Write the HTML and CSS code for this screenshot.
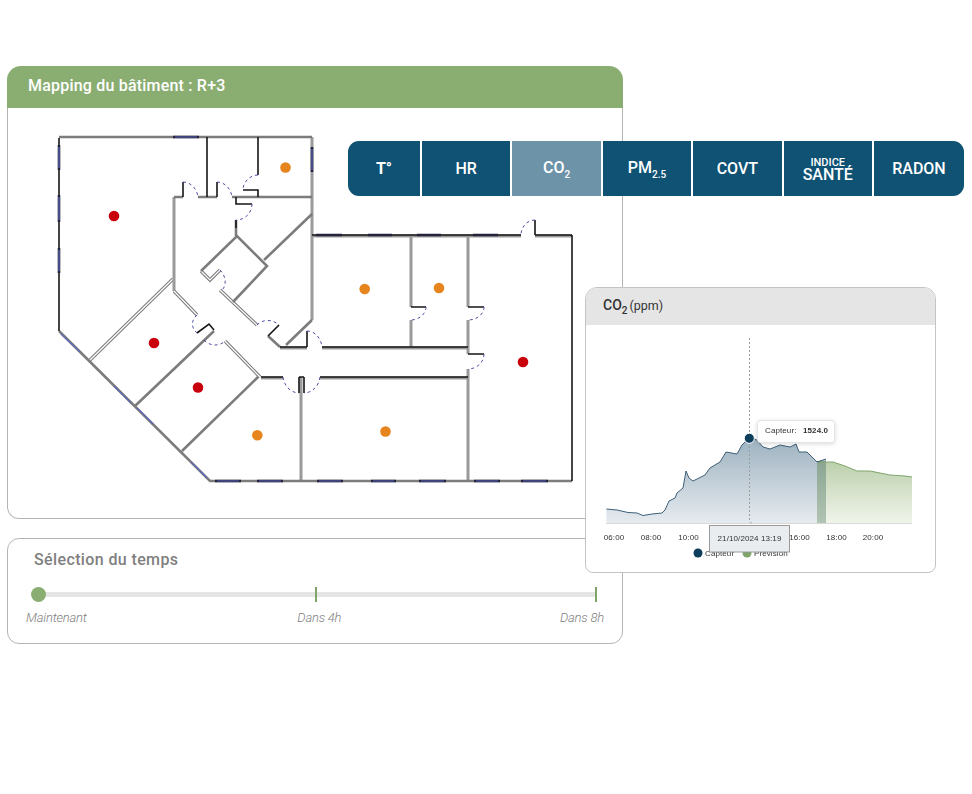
FILE: index.html
```html
<!DOCTYPE html>
<html lang="fr">
<head>
    <meta charset="UTF-8">
    <meta name="viewport" content="width=device-width, initial-scale=1.0">
    <title>Mapping du bâtiment</title>
    <link rel="stylesheet" href="styles.css">
</head>
<body>

<div class="page">
    <section class="map-panel">
        <h2 class="map-title">Mapping du bâtiment : R+3</h2>
        <div class="map-body">
        <svg class="plan" width="614" height="410" viewBox="8 108 614 410">
            <!-- double cloisons -->
            <g class="wall-double">
                <path d="M90 360L173 279M174 291L197 315M225 341L260 377M220 290L257 325M201 271L210 280L220 270"/>
            </g>
            <g class="wall-double-in">
                <path d="M90 360L173 279M174 291L197 315M225 341L260 377M220 290L257 325M201 271L210 280L220 270"/>
            </g>
            <!-- murs clairs sous les traits noirs -->
            <g class="wall-soft">
                <path d="M312 236H521M535 236H572M280 348H307M322 348H468M320 378H468M261 378H283"/>
                <path d="M174 291V197M312 137V320M468 235V307M468 320V354M468 369V481M301 377V481M411 235V307M411 320V347"/>
            </g>
            <!-- murs gris -->
            <g class="wall">
                <path d="M59 137H312"/>
                <path d="M59 331L210 481H572"/>
                <path d="M174 197H183M198 197H217M232 197H312"/>
                <path d="M201 271L237 236L267 266L233 302"/>
                <path d="M264 260L312 214"/>
                <path d="M312 320L286 345"/>
                <path d="M236 220V236"/>
                <path d="M135 406L214 331"/>
                <path d="M182 451L258 377"/>
                <path d="M268 336L280 347"/>
            </g>
            <!-- murs noirs -->
            <g class="wall-dark">
                <path d="M59 138V331"/>
                <path d="M572 235V481"/>
                <path d="M207 137V197M258 137V175M243 190H258V197"/>
                <path d="M183 197V182M217 197V182M236 197V204H252"/>
                <path d="M236 220V228M411 307H426M468 307H484M468 354H484"/>
                <path d="M307 347V331M535 235V220M299 377V393M304 377V393M299 377H304"/>
                <path d="M261 377H283M320 377H468M280 347H307M322 347H468"/>
                <path d="M312 235H521M535 235H572"/>
                <path d="M197 333L209 324L214 330M268 336L279 325"/>
            </g>
            <!-- fenêtres -->
            <g class="window-frame">
                <path d="M173 137H199M59 145V170M59 195V222M59 248V273M312 147V172"/>
                <path d="M316 235H342M368 235H392M417 235H441M473 235H498"/>
                <path d="M215 481H241M257 481H283M317 481H343M371 481H396M419 481H446M474 481H500M521 481H548"/>
            </g>
            <g class="window">
                <path d="M175 137H197M59 147V168M59 197V220M59 250V271M312 149V170"/>
                <path d="M61 334L80 352M114 386L131 403M137 408L153 424M191 462L207 478"/>
                <path d="M217 481H239M259 481H281M319 481H341M373 481H394M421 481H444M476 481H498M523 481H546"/>
            </g>
            <!-- portes -->
            <g class="door">
                <path d="M183 182C191 182 197 189 198 197"/>
                <path d="M217 182C225 182 231 189 232 197"/>
                <path d="M258 175C250 175 243 182 243 190"/>
                <path d="M252 204C252 213 245 220 236 220"/>
                <path d="M220 270C226 276 227 285 222 290"/>
                <path d="M197 315C191 320 191 328 197 333"/>
                <path d="M204 340C209 346 219 347 225 341"/>
                <path d="M257 325C262 319 273 319 279 325"/>
                <path d="M307 331C315 331 321 338 322 347"/>
                <path d="M426 307C426 314 419 320 411 320"/>
                <path d="M484 307C484 314 477 320 468 320"/>
                <path d="M484 354C484 362 477 369 468 369"/>
                <path d="M535 220C527 220 521 227 521 235"/>
                <path d="M283 377C284 386 291 393 299 393"/>
                <path d="M320 377C319 386 312 393 304 393"/>
            </g>
            <!-- capteurs -->
            <g class="dot-red">
                <circle cx="114" cy="216" r="5.3"/>
                <circle cx="154" cy="343" r="5.3"/>
                <circle cx="198" cy="387.500" r="5.3"/>
                <circle cx="523" cy="362" r="5.3"/>
            </g>
            <g class="dot-orange">
                <circle cx="285.500" cy="167.500" r="5.3"/>
                <circle cx="364.700" cy="289" r="5.3"/>
                <circle cx="439" cy="288" r="5.3"/>
                <circle cx="257.300" cy="435.300" r="5.3"/>
                <circle cx="385.500" cy="431.500" r="5.3"/>
            </g>
        </svg>
        </div>
    </section>

    <section class="time-panel">
        <h3 class="time-title">Sélection du temps</h3>
        <div class="slider">
            <span class="thumb"></span>
            <span class="tick tick-mid"></span>
            <span class="tick tick-end"></span>
        </div>
        <div class="slider-labels">
            <span>Maintenant</span>
            <span class="label-mid">Dans 4h</span>
            <span>Dans 8h</span>
        </div>
    </section>

    <nav class="tabs">
        <a class="tab"><span><b>T°</b></span></a>
        <a class="tab"><span>HR</span></a>
        <a class="tab active"><span>CO<sub>2</sub></span></a>
        <a class="tab"><span>PM<sub>2.5</sub></span></a>
        <a class="tab"><span>COVT</span></a>
        <a class="tab tab-stack"><small>INDICE</small><span>SANTÉ</span></a>
        <a class="tab"><span>RADON</span></a>
    </nav>

    <section class="chart-card">
        <div class="chart-head"><b>CO<sub>2</sub></b><span class="unit">(ppm)</span></div>
        <svg class="chart" width="349" height="248" viewBox="586 325 349 248">
            <defs>
                <linearGradient id="gradSensor" x1="0" y1="0" x2="0" y2="1">
                    <stop offset="0" stop-color="#9db2c0"/>
                    <stop offset="1" stop-color="#e6ebef"/>
                </linearGradient>
                <linearGradient id="gradForecast" x1="0" y1="0" x2="0" y2="1">
                    <stop offset="0" stop-color="#bcd0ac"/>
                    <stop offset="1" stop-color="#f1f5ec"/>
                </linearGradient>
                <linearGradient id="gradOverlap" x1="0" y1="0" x2="0" y2="1">
                    <stop offset="0" stop-color="#8ba593"/>
                    <stop offset="1" stop-color="#b2c4b4"/>
                </linearGradient>
            </defs>
            <path class="area-forecast" d="M817 462L833 462L845 466L857 471L870 471L890 475L905 476L912 477V523.500H817Z"/>
            <path class="area-sensor" d="M606.500 509L617 510L628 512.500L637 513L643 515.500L652 514L662 513L665 510L669 501L675 498L677 493L683 488L686 471L689 478L693 481L705 475L710 468L720 462L726 452L737 454L742 445L749 438L757 440L763 447L770 449L780 445L790 447L796 444L799 452L807 452L817 462L826 459V523.500H606.500Z"/>
            <rect class="overlap" x="817" y="461" width="9" height="62.500"/>
            <path class="line-forecast" d="M817 462L833 462L845 466L857 471L870 471L890 475L905 476L912 477"/>
            <path class="line-sensor" d="M606.500 509L617 510L628 512.500L637 513L643 515.500L652 514L662 513L665 510L669 501L675 498L677 493L683 488L686 471L689 478L693 481L705 475L710 468L720 462L726 452L737 454L742 445L749 438L757 440L763 447L770 449L780 445L790 447L796 444L799 452L807 452L817 462L826 459"/>
            <path class="axis" d="M606 523.500H912"/>
            <path class="cursor" d="M749.500 338V520L752 525"/>
            <circle class="cursor-dot" cx="749.300" cy="438.300" r="5"/>

            <g class="axis-labels">
                <text x="614" y="540">06:00</text>
                <text x="651" y="540">08:00</text>
                <text x="688.500" y="540">10:00</text>
                <text x="799.500" y="540">16:00</text>
                <text x="836.500" y="540">18:00</text>
                <text x="873" y="540">20:00</text>
            </g>

            <circle class="legend-sensor" cx="698" cy="553" r="4.500"/>
            <text class="legend-text" x="705" y="556">Capteur</text>
            <circle class="legend-forecast" cx="747" cy="553" r="4.500"/>
            <text class="legend-text" x="754" y="556">Prévision</text>

            <rect class="date-box" x="709.500" y="525.500" width="80" height="26.500"/>
            <text class="date-text" x="749.500" y="541">21/10/2024 13:19</text>

            <rect class="tip-box" x="757.500" y="420.500" width="77" height="22" rx="3"/>
            <text class="tip-text" x="765" y="433">Capteur:</text>
            <text class="tip-value" x="803" y="433">1524.0</text>
        </svg>
    </section>
</div>

</body>
</html>
```

FILE: styles.css
```css
body {
    font-family: Roboto, "Liberation Sans", sans-serif;
    background-color: #fff;
    margin: 0;
    padding: 0;
}
.page {
    position: relative;
    width: 972px;
    height: 794px;
    padding: 66px 0 0 7px;
    box-sizing: border-box;
    overflow: hidden;
}
.map-panel {
    width: 616px;
}
.map-title {
    margin: 0;
    height: 42px;
    padding-left: 21px;
    border-radius: 14px 14px 0 0;
    background-color: #8aad72;
    color: #fff;
    font-size: 16px;
    font-weight: 500;
    letter-spacing: 0.2px;
    line-height: 39px;
}
.map-body {
    height: 411px;
    box-sizing: border-box;
    border: 1px solid #b4b4b4;
    border-top: 0;
    border-radius: 0 0 12px 12px;
}
.plan {
    display: block;
    filter: blur(0.3px);
}
.wall, .wall-soft, .wall-dark, .wall-double, .wall-double-in, .window, .window-frame, .door {
    fill: none;
}
.wall {
    stroke: #7c7c7c;
    stroke-width: 2.6;
}
.wall-soft {
    stroke: #9a9a9a;
    stroke-width: 3;
}
.wall-dark {
    stroke: #161616;
    stroke-width: 1.6;
}
.wall-double {
    stroke: #7d7d7d;
    stroke-width: 3.4;
}
.wall-double-in {
    stroke: #fff;
    stroke-width: 1.2;
}
.window-frame {
    stroke: #23233a;
    stroke-width: 2.6;
}
.window {
    stroke: #5d69bd;
    stroke-width: 1.2;
}
.door {
    stroke: #4e4fa3;
    stroke-width: 1;
    stroke-dasharray: 3 3;
}
.dot-red {
    fill: #c9000b;
}
.dot-orange {
    fill: #e6851e;
}

.time-panel {
    width: 616px;
    height: 106px;
    margin-top: 19px;
    box-sizing: border-box;
    border: 1px solid #b4b4b4;
    border-radius: 12px;
}
.time-title {
    margin: 0;
    padding: 11px 0 0 26px;
    color: #7f7f7f;
    font-size: 16px;
    font-weight: 500;
    letter-spacing: 0.38px;
    line-height: 19px;
}
.slider {
    position: relative;
    height: 5px;
    margin: 23px 26px 0 30px;
    background-color: #e5e5e5;
}
.thumb {
    position: absolute;
    left: -7px;
    top: -5px;
    width: 15px;
    height: 15px;
    border-radius: 50%;
    background-color: #8aad72;
}
.tick {
    position: absolute;
    top: -5px;
    width: 2px;
    height: 15px;
    background-color: #7fa56a;
}
.tick-mid {
    left: 277px;
}
.tick-end {
    right: -1px;
}
.slider-labels {
    display: flex;
    justify-content: space-between;
    margin: 13px 18px 0;
    color: #808080;
    font-size: 13px;
    font-style: italic;
    font-weight: 300;
    letter-spacing: -0.2px;
}
.label-mid {
    margin-right: 8px;
}

.tabs {
    position: absolute;
    left: 348px;
    top: 141px;
    width: 616px;
    height: 55px;
    display: grid;
    grid-template-columns: 72px repeat(5, 88.4px) 1fr;
    gap: 2px;
    background-color: #fff;
    border-radius: 11px;
    overflow: hidden;
}
.tab {
    display: flex;
    align-items: center;
    justify-content: center;
    background-color: #0f5274;
    color: #fff;
    font-size: 16px;
    font-weight: 500;
}
.tab sub {
    font-size: 10px;
    line-height: 1;
    vertical-align: -5px;
}
.tab.active {
    background-color: #6d93a9;
}
.tab-stack {
    flex-direction: column;
    line-height: 12px;
}
.tab-stack small {
    font-size: 11px;
}

.chart-card {
    position: absolute;
    left: 585px;
    top: 287px;
    width: 351px;
    height: 286px;
    box-sizing: border-box;
    border: 1px solid #c4c4c4;
    border-radius: 12px 12px 8px 8px;
    background-color: #fff;
    overflow: hidden;
}
.chart-head {
    height: 37px;
    padding-left: 17px;
    background-color: #e5e5e5;
    color: #333;
    font-size: 12.5px;
    line-height: 35px;
}
.chart-head b {
    font-size: 14px;
    font-weight: 500;
}
.chart-head sub {
    font-size: 10px;
    line-height: 1;
    vertical-align: -4px;
}
.unit {
    margin-left: 2px;
}
.chart {
    display: block;
    filter: blur(0.25px);
}
.area-sensor {
    fill: url(#gradSensor);
}
.area-forecast {
    fill: url(#gradForecast);
}
.overlap {
    fill: url(#gradOverlap);
}
.line-sensor {
    fill: none;
    stroke: #3d5f78;
    stroke-width: 1;
}
.line-forecast {
    fill: none;
    stroke: #7fa56a;
    stroke-width: 1;
}
.axis {
    stroke: #d8d8d8;
    stroke-width: 1;
}
.cursor {
    fill: none;
    stroke: #9c9c9c;
    stroke-width: 1;
    stroke-dasharray: 2 2;
}
.cursor-dot {
    fill: #0d3f5c;
    stroke: #fff;
    stroke-width: 1;
}
.axis-labels text, .legend-text, .date-text, .tip-text, .tip-value {
    font-family: "Liberation Sans", sans-serif;
    font-size: 8px;
    letter-spacing: 0.1px;
    fill: #333;
}
.axis-labels text, .date-text {
    text-anchor: middle;
}
.legend-sensor {
    fill: #0d3f5c;
}
.legend-forecast {
    fill: #7fa56a;
}
.date-box {
    fill: #e9edf0;
    stroke: #9a9a9a;
    stroke-width: 1;
}
.tip-box {
    fill: #fff;
    stroke: #e4e4e4;
    stroke-width: 1;
    filter: drop-shadow(0 1px 2px rgba(0, 0, 0, 0.15));
}
.tip-value {
    font-weight: bold;
}
```
